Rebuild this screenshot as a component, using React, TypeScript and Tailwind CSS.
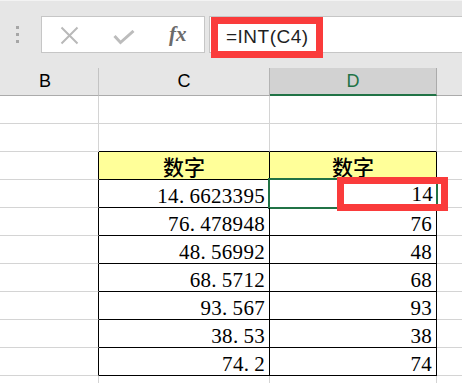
import type { ReactNode } from 'react'

const serif = { fontFamily: '"Liberation Serif", "Noto Sans CJK SC", serif' }

type RowKind = 'empty' | 'above' | 'head' | 'data' | 'tail'

const data: [string, string][] = [
  ['14.6623395', '14'],
  ['76.478948', '76'],
  ['48.56992', '48'],
  ['68.5712', '68'],
  ['93.567', '93'],
  ['38.53', '38'],
  ['74.2', '74'],
]

function FormulaBar() {
  return (
    <div className="relative h-[68px] bg-[#e6e6e6] border-t border-[#f3f3f3] flex items-start">
      {/* drag handle dots */}
      <div className="ml-[16px] mt-[25px] flex flex-col gap-[4px]">
        <div className="w-[3px] h-[3px] bg-[#a6a6a6]" />
        <div className="w-[3px] h-[3px] bg-[#a6a6a6]" />
        <div className="w-[3px] h-[3px] bg-[#a6a6a6]" />
      </div>

      {/* cancel / enter / fx */}
      <div className="ml-[22px] mt-[15px] w-[164px] h-[37px] bg-white border border-[#c6c6c6] relative">
        <svg className="absolute left-[18px] top-[9px]" width="19" height="19" viewBox="0 0 19 19">
          <path d="M1.5 1.5 L17.5 17.5 M17.5 1.5 L1.5 17.5" stroke="#b9b9b9" strokeWidth="2" fill="none" />
        </svg>
        <svg className="absolute left-[71px] top-[13px]" width="22" height="15" viewBox="0 0 22 15">
          <path d="M1.5 6 L7.5 12.5 L20.5 1" stroke="#bcbcbc" strokeWidth="3" fill="none" />
        </svg>
        <span
          className="absolute left-[127px] top-[4px] text-[21px] italic font-bold text-[#6b6b6b] leading-[26px]"
          style={serif}
        >
          fx
        </span>
      </div>

      {/* formula input */}
      <div className="ml-[4px] mt-[15px] flex-1 h-[37px] bg-white border border-[#c6c6c6] -mr-[2px]" />

      {/* highlight around the formula */}
      <div className="absolute left-[211px] top-[16px] w-[112px] h-[41px] border-[7px] border-[#fa3b3b] bg-white flex items-center">
        <span
          className="pl-[8px] text-[19px] tracking-[0.5px] text-[#1f1f1f]"
          style={{ fontFamily: '"Liberation Sans", Arial, sans-serif' }}
        >
          =INT(C4)
        </span>
      </div>
    </div>
  )
}

function ColumnHeaders() {
  const sans = { fontFamily: '"Liberation Sans", Arial, sans-serif' }
  return (
    <div className="flex h-[28px] bg-[#e6e6e6] text-[18px] text-black" style={sans}>
      <div className="w-[99px] border-r border-b border-r-[#c3c3c3] border-b-[#ababab] flex items-center justify-center pr-[8px]">
        B
      </div>
      <div className="w-[171px] border-r border-b border-r-[#b3b3b3] border-b-[#ababab] flex items-center justify-center">
        C
      </div>
      <div className="w-[167px] bg-[#d2d2d2] border-r border-r-[#ababab] border-b-2 border-b-[#217346] flex items-center justify-center text-[#217346]">
        D
      </div>
      <div className="flex-1 border-b border-b-[#ababab]" />
    </div>
  )
}

function Cell({ w, right, bottom, bg, children }: { w: string; right: string; bottom: string; bg?: string; children?: ReactNode }) {
  return (
    <div className={`${w} ${right} ${bottom} ${bg ?? ''} relative border-r border-b h-full`}>{children}</div>
  )
}

// SimSun-style: the decimal point takes a full half-width slot
function Digits({ value }: { value: string }) {
  const [whole, frac] = value.split('.')
  if (frac === undefined) return <>{whole}</>
  return (
    <>
      {whole}
      <span className="inline-block w-[10.5px] text-left">.</span>
      {frac}
    </>
  )
}

function Num({ children }: { children: string }) {
  return (
    <div className="text-right pr-[4px] pt-[3px] leading-[27px] text-[21px] tracking-[0.3px] text-black" style={serif}>
      <Digits value={children} />
    </div>
  )
}

function Row({ kind, c, d, selected }: { kind: RowKind; c?: string; d?: string; selected?: boolean }) {
  const inTable = kind === 'head' || kind === 'data'
  const bRight = inTable ? 'border-r-black' : 'border-r-[#d4d4d4]'
  const tRight = inTable ? 'border-r-black' : 'border-r-[#d4d4d4]'
  const tBottom = inTable || kind === 'above' ? 'border-b-black' : 'border-b-[#d4d4d4]'
  const h = kind === 'tail' ? 'h-[8px]' : 'h-[28px]'
  const bg = kind === 'head' ? 'bg-[#ffff99]' : undefined

  return (
    <div className={`flex ${h}`}>
      <Cell w="w-[99px]" right={bRight} bottom="border-b-[#d4d4d4]" />
      <Cell w="w-[171px]" right={tRight} bottom={tBottom} bg={bg}>
        {kind === 'head' && <Header />}
        {kind === 'data' && c && <Num>{c}</Num>}
      </Cell>
      <Cell w="w-[167px]" right={tRight} bottom={tBottom} bg={bg}>
        {kind === 'head' && <Header />}
        {kind === 'data' && !selected && d && <Num>{d}</Num>}
        {selected && (
          <>
            <div className="absolute -left-[2px] -top-[2px] -right-[2px] -bottom-[2px] border-2 border-[#217346]" />
            {/* red annotation box */}
            <div className="absolute left-[67px] -top-[3px] w-[111px] h-[34px] border-[7px] border-[#fa3b3b] bg-white z-10">
              <div className="absolute left-[92px] top-0 w-[2px] h-full bg-[#217346]" />
              <div
                className="text-right pr-[8px] leading-[20px] text-[21px] tracking-[0.3px] text-black"
                style={serif}
              >
                {d}
              </div>
            </div>
          </>
        )}
      </Cell>
      <div className="flex-1 border-b border-[#d4d4d4]" />
    </div>
  )
}

function Header() {
  return (
    <div
      className="text-center pt-[2px] leading-[25px] text-[21px] font-medium text-black"
      style={{ fontFamily: '"Noto Sans CJK SC", sans-serif' }}
    >
      数字
    </div>
  )
}

export default function App() {
  return (
    <div className="w-[462px] h-[383px] overflow-hidden bg-white">
      <FormulaBar />
      <ColumnHeaders />
      <Row kind="empty" />
      <Row kind="above" />
      <Row kind="head" />
      {data.map(([c, d], i) => (
        <Row key={i} kind="data" c={c} d={d} selected={i === 0} />
      ))}
      <Row kind="tail" />
    </div>
  )
}
